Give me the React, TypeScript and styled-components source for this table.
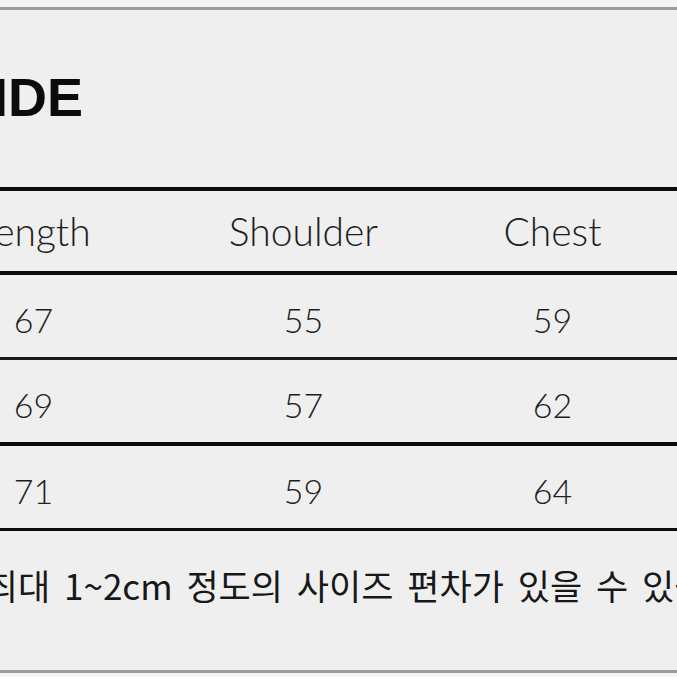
import React from 'react';
import styled, { createGlobalStyle } from 'styled-components';

const GlobalStyle = createGlobalStyle`
  html, body {
    margin: 0;
    padding: 0;
    background-color: #f4f4f3;
    overflow: hidden;
  }
`;

const Page = styled.div`
  width: 677px;
  height: 677px;
  padding-top: 7px;
  box-sizing: border-box;
  overflow: hidden;
`;

const Sheet = styled.section`
  height: 666px;
  box-sizing: border-box;
  background-color: #efefef;
  border-top: 3px solid #9c9c9c;
  border-bottom: 3px solid #9c9c9c;
  display: flex;
  flex-direction: column;
`;

const TitleBox = styled.div`
  display: flex;
  justify-content: flex-end;
  width: 83px;
  height: 177px;
  padding-top: 60px;
  box-sizing: border-box;
`;

const Title = styled.h1`
  margin: 0;
  white-space: nowrap;
  color: #0b0b0b;
  font-family: 'Liberation Sans', Arial, sans-serif;
  font-size: 54px;
  font-weight: 700;
  line-height: 1;
`;

const Table = styled.div`
  display: flex;
  flex-direction: column;
  border-top: 4px solid #0c0c0c;
`;

const Row = styled.div<{ $header?: boolean; $rule?: string }>`
  display: grid;
  grid-template-columns: 120px 291px 249px 249px 249px;
  margin-left: -232px;
  height: ${({ $header }) => ($header ? '80px' : '82px')};
  border-bottom: ${({ $rule }) => $rule || '4px solid #0c0c0c'};
  align-items: center;
`;

const Cell = styled.div<{ $header?: boolean }>`
  text-align: center;
  color: #1e1e1e;
  font-family: Lato, 'Open Sans', sans-serif;
  font-weight: 300;
  font-size: ${({ $header }) => ($header ? '39px' : '34px')};
  padding-top: ${({ $header }) => ($header ? '0' : '7px')};
  white-space: nowrap;
`;

const Note = styled.div`
  display: flex;
  padding-top: 28px;
  white-space: nowrap;
  color: #181818;
  font-family: 'Noto Sans CJK KR', sans-serif;
  font-size: 35px;
  font-weight: 400;
  word-spacing: 6px;
`;

const NoteLead = styled.span`
  display: flex;
  justify-content: flex-end;
  flex: 0 0 18px;
  min-width: 0;
`;

const headers = ['Size', 'Length', 'Shoulder', 'Chest', 'Sleeve'];

const sizes = [
  { values: ['S', '67', '55', '59', '60'], rule: '3px solid #1a1a1a' },
  { values: ['M', '69', '57', '62', '61'], rule: '4px solid #0c0c0c' },
  { values: ['L', '71', '59', '64', '62'], rule: '3px solid #0c0c0c' },
];

const App: React.FC = () => {
  return (
    <React.Fragment>
      <GlobalStyle />
      <Page>
        <Sheet>
          <TitleBox>
            <Title>SIZE GUIDE</Title>
          </TitleBox>
          <Table>
            <Row $header>
              {headers.map((h) => (
                <Cell key={h} $header>
                  {h}
                </Cell>
              ))}
            </Row>
            {sizes.map((s) => (
              <Row key={s.values[0]} $rule={s.rule}>
                {s.values.map((v, i) => (
                  <Cell key={i}>{v}</Cell>
                ))}
              </Row>
            ))}
          </Table>
          <Note>
            <NoteLead>
              <span>측정 방법에 따라 최</span>
            </NoteLead>
            <span>대 1~2cm 정도의 사이즈 편차가 있을 수 있습니다.</span>
          </Note>
        </Sheet>
      </Page>
    </React.Fragment>
  );
};

export default App;
